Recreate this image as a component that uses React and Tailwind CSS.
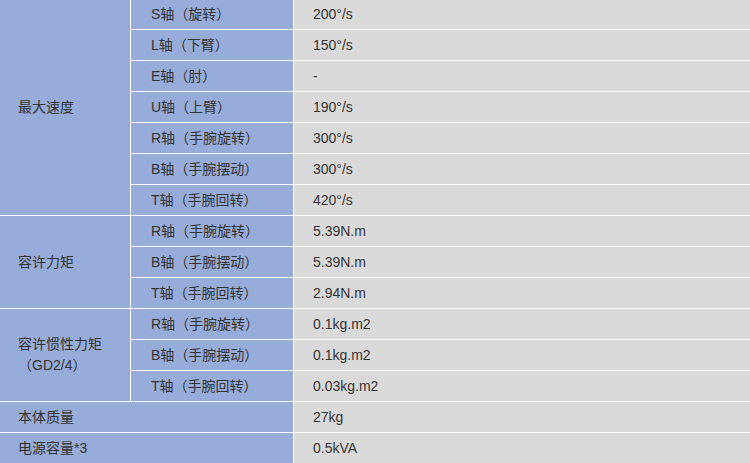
const speed = [
  ['S轴（旋转）', '200°/s'],
  ['L轴（下臂）', '150°/s'],
  ['E轴（肘）', '-'],
  ['U轴（上臂）', '190°/s'],
  ['R轴（手腕旋转）', '300°/s'],
  ['B轴（手腕摆动）', '300°/s'],
  ['T轴（手腕回转）', '420°/s'],
];

const torque = [
  ['R轴（手腕旋转）', '5.39N.m'],
  ['B轴（手腕摆动）', '5.39N.m'],
  ['T轴（手腕回转）', '2.94N.m'],
];

const inertia = [
  ['R轴（手腕旋转）', '0.1kg.m2'],
  ['B轴（手腕摆动）', '0.1kg.m2'],
  ['T轴（手腕回转）', '0.03kg.m2'],
];

const Group = ({ label, span, rows }) => (
  <>
    <div className={`${span} bg-[#98acd9] pl-[18px] flex items-center leading-[21px]`}>{label}</div>
    {rows.map(([axis, value], i) => (
      <div key={i} className="contents">
        <div className="bg-[#98acd9] pl-[20px] flex items-center">{axis}</div>
        <div className="bg-[#dadada] pl-[19px] flex items-center">{value}</div>
      </div>
    ))}
  </>
);

export default function App() {
  return (
    <div className="w-[750px] h-[463px] overflow-hidden bg-white">
      <div
        className="-mt-px grid grid-cols-[130px_162px_1fr] auto-rows-[30px] gap-px bg-white text-[14px] text-[#333333]"
        style={{ fontFamily: '"Liberation Sans", Arial, "Noto Sans CJK SC", sans-serif' }}
      >
        <Group label="最大速度" span="row-span-7" rows={speed} />
        <Group label="容许力矩" span="row-span-3" rows={torque} />
        <Group label={<span>容许惯性力矩<br />（GD2/4）</span>} span="row-span-3" rows={inertia} />
        <div className="col-span-2 bg-[#98acd9] pl-[18px] flex items-center">本体质量</div>
        <div className="bg-[#dadada] pl-[19px] flex items-center">27kg</div>
        <div className="col-span-2 bg-[#98acd9] pl-[18px] flex items-center">电源容量*3</div>
        <div className="bg-[#dadada] pl-[19px] flex items-center">0.5kVA</div>
      </div>
    </div>
  );
}
